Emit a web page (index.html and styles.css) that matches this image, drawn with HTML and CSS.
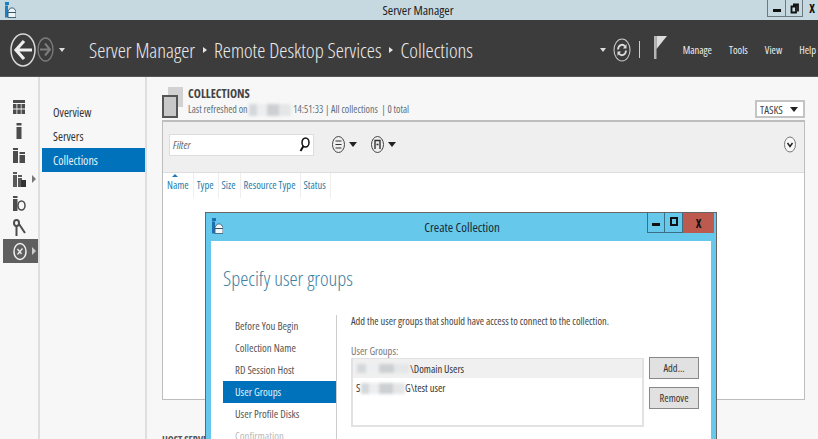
FILE: index.html
```html
<!DOCTYPE html>
<html lang="en">
<head>
<meta charset="utf-8">
<title>Server Manager</title>
<link rel="stylesheet" href="styles.css">
</head>
<body>
<div class="app">
  <div class="titlebar">
    <svg class="app-icon" width="11" height="16" viewBox="0 0 11 16"><rect x="0" y="0" width="4" height="3" fill="#1d7fc0"/><rect x="0" y="3.500" width="3" height="12" fill="#1d7fc0"/><path d="M3 9l2.500-3h3l2.500 3v6.500H3z" fill="#eef5f8" stroke="#34566f" stroke-width=".9"/><rect x="3" y="10" width="8" height="1" fill="#34566f"/></svg>
    <span class="titlebar-text">Server Manager</span>
    <div class="winbtns">
      <span class="winbtn"><i class="glyph-min"></i></span>
      <span class="winbtn winbtn-max"><svg width="9" height="11" viewBox="0 0 9 11"><path d="M3 1.500h5v7M1.500 3.500h4.500v6h-4.500z" fill="none" stroke="#111" stroke-width="1.800"/></svg></span>
      <span class="winbtn winbtn-x">X</span>
    </div>
  </div>

  <header class="header">
    <svg class="back" width="26" height="34" viewBox="0 0 26 34"><ellipse cx="13" cy="17" rx="12" ry="16" fill="none" stroke="#d8d8d8" stroke-width="1.500"/><path d="M22 17H7M14 8l-8 9 8 9" fill="none" stroke="#eee" stroke-width="3.200"/></svg>
    <svg class="forward" width="17" height="25" viewBox="0 0 17 25"><ellipse cx="8.500" cy="12.500" rx="7.500" ry="11.500" fill="none" stroke="#7d7d7d" stroke-width="1.300"/><path d="M3 12.500h9M8 6.500l5 6-5 6" fill="none" stroke="#7d7d7d" stroke-width="2"/></svg>
    <i class="caret caret-light nav-caret"></i>
    <div class="crumbs">
      <span>Server Manager</span><i class="crumb-sep"></i><span>Remote Desktop Services</span><i class="crumb-sep"></i><span>Collections</span>
    </div>
    <div class="hdr-right">
      <i class="caret caret-light"></i>
      <svg class="refresh" width="18" height="24" viewBox="0 0 18 24"><ellipse cx="9" cy="12" rx="8" ry="11" fill="none" stroke="#c8c8c8" stroke-width="1.100"/><path d="M5 11.500a4 5 0 0 1 7-3M13 12.500a4 5 0 0 1-7 3" fill="none" stroke="#ddd" stroke-width="1.800"/><path d="M13.500 6v4.500H10zM4.500 18v-4.500H8z" fill="#ddd"/></svg>
      <i class="hdr-div"></i>
      <svg class="flag" width="13" height="23" viewBox="0 0 13 23"><rect x="0" y="0" width="2.500" height="23" fill="#b5b5b5"/><path d="M2.500 0H13L2.500 13z" fill="#dcdcdc"/></svg>
      <nav class="menu"><span>Manage</span><span>Tools</span><span>View</span><span>Help</span></nav>
    </div>
  </header>

  <div class="body">
    <aside class="rail">
      <div class="rail-row"><svg width="12" height="14" viewBox="0 0 12 14"><path fill="#4c4c4c" d="M0 0h12v3H0zM0 4h3.500v4.500H0zM4.300 4h3.500v4.500H4.300zM8.500 4H12v4.500H8.500zM0 9.500h3.500V14H0zM4.300 9.500h3.500V14H4.300zM8.500 9.500H12V14H8.500z"/></svg></div>
      <div class="rail-row"><svg width="12" height="16" viewBox="0 0 12 16"><path fill="#4c4c4c" d="M3.500 0h5v2.500h-5zM3.500 4h5v12h-5z"/></svg></div>
      <div class="rail-row"><svg width="12" height="15" viewBox="0 0 12 15"><path fill="#4c4c4c" d="M0 0h5v2H0zM0 3h5v12H0zM6.500 4H12v2H6.500zM6.500 7H12v8H6.500z"/></svg></div>
      <div class="rail-row"><svg width="13" height="15" viewBox="0 0 13 15"><path fill="#5a5a5a" d="M0 0h4v2H0zM0 3h4v12H0zM5 3h4v2H5zM5 6h4v9H5z"/><rect x="8" y="8" width="5" height="7" fill="#333"/></svg><i class="tri"></i></div>
      <div class="rail-row"><svg width="13" height="15" viewBox="0 0 13 15"><path fill="#4c4c4c" d="M0 0h4.500v2H0zM0 3h4.500v12H0z"/><ellipse cx="8.500" cy="9.500" rx="3.500" ry="4.500" fill="none" stroke="#4c4c4c" stroke-width="1.500"/></svg></div>
      <div class="rail-row"><svg width="13" height="17" viewBox="0 0 13 17"><ellipse cx="3.500" cy="4" rx="2.500" ry="3" fill="none" stroke="#4c4c4c" stroke-width="2"/><path d="M3.500 7v10M6 5l6 9" stroke="#4c4c4c" stroke-width="2"/></svg></div>
      <div class="rail-row rail-active"><svg width="14" height="19" viewBox="0 0 14 19"><ellipse cx="7" cy="9.500" rx="6" ry="8" fill="none" stroke="#f0f0f0" stroke-width="1.500"/><path d="M4.500 12.500l5-6M4.500 7l4 5" stroke="#eee" stroke-width="1.300"/></svg><i class="tri tri-light"></i></div>
    </aside>

    <nav class="sidenav">
      <a class="side-item">Overview</a>
      <a class="side-item">Servers</a>
      <a class="side-item side-active">Collections</a>
    </nav>

    <main class="main">
      <div class="section-head">
        <div class="stack"><i class="stack-back"></i><i class="stack-front"></i></div>
        <div class="section-text">
          <div class="section-title">COLLECTIONS</div>
          <div class="section-sub">Last refreshed on <i class="blur blur-date"></i> 14:51:33 | All collections &nbsp;| 0 total</div>
        </div>
        <button class="tasks">TASKS<i class="caret caret-dark"></i></button>
      </div>
      <section class="panel">
        <div class="toolbar">
          <div class="filter"><em>Filter</em>
            <svg width="11" height="15" viewBox="0 0 11 15"><ellipse cx="6.500" cy="5.500" rx="3.500" ry="4.500" fill="none" stroke="#111" stroke-width="1.500"/><path d="M4.500 9L1.500 14" stroke="#111" stroke-width="2"/></svg>
          </div>
          <div class="tool">
            <svg width="13" height="17" viewBox="0 0 13 17"><ellipse cx="6.500" cy="8.500" rx="6" ry="8" fill="none" stroke="#444"/><path d="M3.500 5h6M3.500 8.500h6M3.500 12h6" stroke="#333" stroke-width="1.200"/></svg>
            <i class="caret caret-dark"></i>
          </div>
          <div class="tool">
            <svg width="13" height="17" viewBox="0 0 13 17"><ellipse cx="6.500" cy="8.500" rx="6" ry="8" fill="none" stroke="#444"/><path d="M4 13V4.500h5V13M5.500 8.500h2" fill="none" stroke="#333" stroke-width="1.400"/></svg>
            <i class="caret caret-dark"></i>
          </div>
          <svg class="expand" width="12" height="17" viewBox="0 0 12 17"><ellipse cx="6" cy="8.500" rx="5.500" ry="7.500" fill="#f8f8f8" stroke="#777"/><path d="M3.500 7L6 10.500 8.500 7" fill="none" stroke="#222" stroke-width="1.500"/></svg>
        </div>
        <div class="columns">
          <span class="col col-sorted">Name</span><span class="col">Type</span><span class="col">Size</span><span class="col">Resource Type</span><span class="col">Status</span>
        </div>
      </section>
      <div class="next-section">HOST SERVERS</div>
    </main>
  </div>

  <div class="dialog">
    <div class="dlg-title">
      <svg class="dlg-icon" width="11" height="16" viewBox="0 0 11 16"><rect x="0" y="0" width="4" height="3" fill="#1d6fb0"/><rect x="0" y="3.500" width="3" height="12" fill="#1d6fb0"/><path d="M3 9l2.500-3h3l2.500 3v6.500H3z" fill="#f3f8fb" stroke="#34566f" stroke-width=".8"/><rect x="3" y="10" width="8" height="1" fill="#34566f"/></svg>
      <span class="dlg-title-text">Create Collection</span>
      <div class="dlg-btns">
        <span class="dlg-btn"><i class="glyph-min"></i></span>
        <span class="dlg-btn"><i class="glyph-max"></i></span>
        <span class="dlg-btn dlg-close">X</span>
      </div>
    </div>
    <div class="dlg-content">
      <h1 class="dlg-heading">Specify user groups</h1>
      <div class="dlg-columns">
        <ul class="steps">
          <li>Before You Begin</li>
          <li>Collection Name</li>
          <li>RD Session Host</li>
          <li class="step-active">User Groups</li>
          <li>User Profile Disks</li>
          <li class="step-disabled">Confirmation</li>
        </ul>
        <div class="dlg-main">
          <p class="dlg-desc">Add the user groups that should have access to connect to the collection.</p>
          <label class="dlg-label">User Groups:</label>
          <div class="group-row">
            <div class="listbox">
              <div class="list-item list-selected"><i class="blur blur-domain"></i>\Domain Users</div>
              <div class="list-item"><span class="initial">S</span><i class="blur blur-user"></i>G\test user</div>
            </div>
            <div class="dlg-actions">
              <button class="btn">Add...</button>
              <button class="btn">Remove</button>
            </div>
          </div>
        </div>
      </div>
    </div>
  </div>
</div>
</body>
</html>
```
FILE: styles.css
```css
* { box-sizing: border-box; }
html, body { margin: 0; height: 100%; overflow: hidden; }
body { font-family: "Open Sans", "Liberation Sans", sans-serif; font-stretch: 75%; color: #333; background: #f7f7f7; }
i { display: block; font-style: normal; }
button { font: inherit; font-stretch: 75%; }
.app { position: relative; width: 818px; height: 439px; overflow: hidden; display: flex; flex-direction: column; }

.titlebar { height: 20px; flex: none; background: #c6d9e1; display: flex; align-items: center; justify-content: center; position: relative; }
.app-icon { position: absolute; left: 5px; top: 2px; }
.titlebar-text { font-size: 13px; color: #222; margin-left: 18px; }
.winbtns { position: absolute; left: 767px; top: 0; height: 17px; display: flex; }
.winbtn { width: 19px; height: 17px; border: 1px solid #6c7a80; border-top: 0; display: flex; align-items: center; justify-content: center; font-size: 12px; font-weight: bold; color: #111; }
.winbtn-max { width: 17px; border-left: 0; }
.winbtn-x { width: 18px; border: 0; }
.glyph-min { width: 8px; height: 3px; background: #111; margin-top: 4px; }
.glyph-max { width: 8px; height: 9px; border: 2px solid #111; margin-top: -3px; }

.header { height: 57px; flex: none; background: #3c3c3c; border-bottom: 1px solid #555; display: flex; align-items: center; padding: 3px 2px 0 10px; }
.back { flex: none; }
.forward { flex: none; margin-left: 1px; }
.caret { width: 0; height: 0; border-left: 4px solid transparent; border-right: 4px solid transparent; border-top: 5px solid #333; flex: none; }
.caret-light { border-top-color: #ddd; border-left-width: 3px; border-right-width: 3px; border-top-width: 4px; }
.caret-dark { border-top-color: #222; }
.nav-caret { margin-left: 5px; margin-right: 24px; }
.crumbs { display: flex; align-items: center; gap: 7.500px; font-size: 20.600px; font-weight: 300; color: #ececec; white-space: nowrap; }
.crumb-sep { width: 0; height: 0; border-top: 3.500px solid transparent; border-bottom: 3.500px solid transparent; border-left: 4px solid #e5e5e5; }
.hdr-right { margin-left: auto; display: flex; align-items: center; }
.refresh { margin-left: 7px; }
.hdr-div { width: 1px; height: 17px; background: #ccc; margin: 0 14px 0 8px; }
.flag { margin-right: 16px; margin-top: -4px; }
.menu { display: flex; gap: 17px; font-size: 10.500px; color: #eee; }

.body { flex: 1; display: flex; min-height: 0; }
.rail { width: 40px; flex: none; border-right: 2px solid #dedede; padding-top: 18px; display: flex; flex-direction: column; background: #f7f7f7; }
.rail-row { display: flex; align-items: center; gap: 6px; padding-left: 13px; height: 24px; width: 38px; }
.rail-active { background: #5f5f5f; padding-left: 10px; margin-left: 3px; width: 35px; gap: 5px; }
.tri { width: 0; height: 0; border-top: 4px solid transparent; border-bottom: 4px solid transparent; border-left: 4px solid #777; }
.tri-light { border-left-color: #ccc; }

.sidenav { width: 107px; flex: none; border-right: 2px solid #dedede; padding: 23px 0 0 2px; display: flex; flex-direction: column; background: #f7f7f7; }
.side-item { height: 24px; font-size: 12px; color: #333; padding-left: 11px; display: flex; align-items: center; width: 103px; }
.side-active { background: #0072bc; color: #e8f3fa; }

.main { flex: 1; min-width: 0; padding: 8px 13px 0 15px; background: #f7f7f7; display: flex; flex-direction: column; }
.section-head { height: 35px; display: flex; align-items: flex-start; flex: none; }
.stack { width: 26px; height: 32px; position: relative; flex: none; margin: 2px 0 0 0; }
.stack-back { position: absolute; left: 6px; top: 0; width: 15px; height: 20px; background: #d2d2d2; }
.stack-front { position: absolute; left: 0; top: 8px; width: 16px; height: 23px; background: #c8c8c8; border: 2px solid #555; }
.section-text { padding-top: 2px; }
.section-title { font-size: 12px; font-weight: 700; color: #444; line-height: 14px; }
.section-sub { font-size: 10px; color: #5f6f78; line-height: 15px; margin-top: 1px; white-space: nowrap; }
.blur { display: inline-block; filter: blur(1.500px); background: linear-gradient(90deg, #d5d8da 0 18%, #eceeef 18% 42%, #cdd0d2 42% 72%, #e4e6e7 72%); vertical-align: middle; }
.blur-date { width: 42px; height: 12px; }
.blur-domain { width: 52px; height: 9px; margin-right: 1px; flex: none; }
.blur-user { width: 44px; height: 11px; flex: none; }
.tasks { margin-left: auto; margin-top: 15px; width: 50px; height: 18px; border: 2px solid #c4c4c4; background: #fff; font-size: 11px; color: #444; display: flex; align-items: center; justify-content: space-between; padding: 0 5px 0 3px; }

.panel { height: 280px; flex: none; border: 1px solid #bdbdbd; border-top-width: 2px; background: #fff; }
.toolbar { height: 51px; background: #efefef; border-bottom: 1px solid #ddd; display: flex; align-items: center; padding: 0 8px 5px 6px; }
.filter { width: 145px; height: 22px; background: #fff; border: 1px solid #ddd; display: flex; align-items: center; justify-content: space-between; padding: 0 3px; font-size: 11px; color: #666; margin-right: 18px; }
.tool { display: flex; align-items: center; gap: 4px; width: 39px; }
.expand { margin-left: auto; }
.columns { display: flex; align-items: center; height: 25px; font-size: 10.500px; color: #2a7cab; }
.col { padding: 0 4px 0 3px; height: 25px; line-height: 25px; border-right: 1px solid #eee; position: relative; white-space: nowrap; }
.col-sorted { padding-left: 4px; }
.col-sorted::before { content: ""; position: absolute; left: 9px; top: 1px; border-left: 3px solid transparent; border-right: 3px solid transparent; border-bottom: 3px solid #1c78b4; }
.next-section { font-size: 10px; font-weight: 700; color: #555; margin-top: 33px; line-height: 14px; }

.dialog { position: absolute; left: 205px; top: 212px; width: 512px; height: 240px; background: #66c9ec; border: 1px solid #666; border-bottom: 0; padding: 0 5px; display: flex; flex-direction: column; }
.dlg-title { height: 28px; flex: none; display: flex; align-items: center; justify-content: center; position: relative; }
.dlg-icon { position: absolute; left: 1px; top: 5px; }
.dlg-title-text { font-size: 13px; color: #1a2a33; margin-left: 2px; }
.dlg-btns { position: absolute; right: -3px; top: 0; height: 20px; display: flex; }
.dlg-btn { width: 18px; height: 20px; border: 1px solid #3b6f87; border-top: 0; display: flex; align-items: center; justify-content: center; font-size: 12px; font-weight: bold; color: #111; }
.dlg-btn + .dlg-btn { border-left: 0; }
.dlg-close { width: 31px; background: #bc5a50; border: 0; }
.dlg-content { flex: 1; background: #fff; padding: 0 0 0 12px; }
.dlg-heading { margin: 22px 0 0; font-size: 20.500px; font-weight: 300; color: #3d7f9f; line-height: 30px; }
.dlg-columns { display: flex; margin-top: 22px; }
.steps { list-style: none; margin: 0; padding: 0; width: 114px; flex: none; border-right: 1px solid #ccc; }
.steps li { height: 22px; line-height: 22px; font-size: 10.800px; color: #555; padding-left: 12px; width: 113px; }
.steps .step-active { background: #0072bc; color: #e2f0f8; }
.steps .step-disabled { color: #bbb; }
.dlg-main { padding-left: 14px; width: 360px; flex: none; }
.dlg-desc { margin: -1px 0 0; font-size: 10.400px; line-height: 15px; color: #444; white-space: nowrap; }
.dlg-label { display: block; margin-top: 15px; font-size: 10.500px; line-height: 14px; color: #777; }
.group-row { display: flex; gap: 5px; }
.listbox { width: 293px; height: 69px; flex: none; border: 2px solid #e2e2e2; border-top-width: 1px; background: #fff; }
.list-item { height: 20px; font-size: 10.500px; color: #333; padding-left: 3px; white-space: nowrap; display: flex; align-items: center; }
.list-selected { background: #f0f0f0; padding-left: 4px; height: 19px; }
.initial { width: 5px; }
.dlg-actions { display: flex; flex-direction: column; gap: 8px; margin-top: -1px; }
.btn { width: 50px; height: 22px; background: #e1e1e1; border: 1px solid #888; font-size: 10.500px; color: #333; padding: 0; }
```
